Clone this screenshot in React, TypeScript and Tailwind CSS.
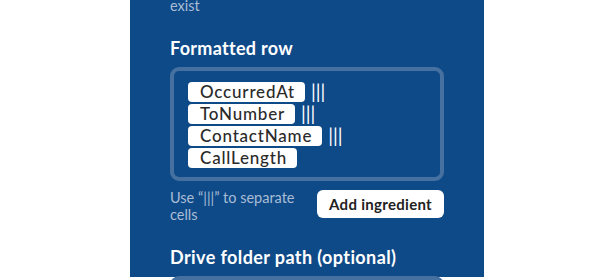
const rows = [
  { name: 'OccurredAt', sep: true },
  { name: 'ToNumber', sep: true },
  { name: 'ContactName', sep: true },
  { name: 'CallLength', sep: false },
];

export default function App() {
  return (
    <div className="h-[280px] w-full overflow-hidden bg-white font-['Lato','Noto_Sans',sans-serif]">
      <div className="ml-[130px] h-full w-[354px] bg-[#0f4a88] px-10">
        <p className="-mt-[3px] text-[14.5px] leading-[17px] text-[#a9bdd6]">exist</p>

        <h3 className="mt-[22px] text-[18px] font-bold leading-[24px] tracking-[0.3px] text-white">Formatted row</h3>

        <div className="mt-[7px] h-[114px] rounded-[9px] border-4 border-[#45709f] px-[14px] pt-[11px]">
          <div className="flex flex-col gap-[2px]">
            {rows.map((r) => (
              <div key={r.name} className="flex items-center">
                <span className="rounded-[4px] bg-white pl-[12px] pr-[10px] text-[17px] leading-[20px] font-medium tracking-[0.8px] text-[#2a2a2a]">
                  {r.name}
                </span>
                {r.sep && <span className="ml-[6px] text-[19px] leading-[20px] text-white">|||</span>}
              </div>
            ))}
          </div>
        </div>

        <div className="mt-[8px] flex items-start justify-between">
          <p className="w-[132px] text-[14.5px] leading-[17px] text-[#a9bdd6]">Use “|||” to separate cells</p>
          <button className="mt-[1px] h-[28px] rounded-[6px] bg-white px-[12px] text-[15px] font-bold tracking-[0.3px] text-[#222]">
            Add ingredient
          </button>
        </div>

        <h3 className="mt-[22px] text-[18px] font-bold leading-[24px] tracking-[0.4px] text-white">Drive folder path (optional)</h3>
        <div className="mt-[7px] h-[40px] rounded-[9px] border-4 border-[#45709f]" />
      </div>
    </div>
  );
}
